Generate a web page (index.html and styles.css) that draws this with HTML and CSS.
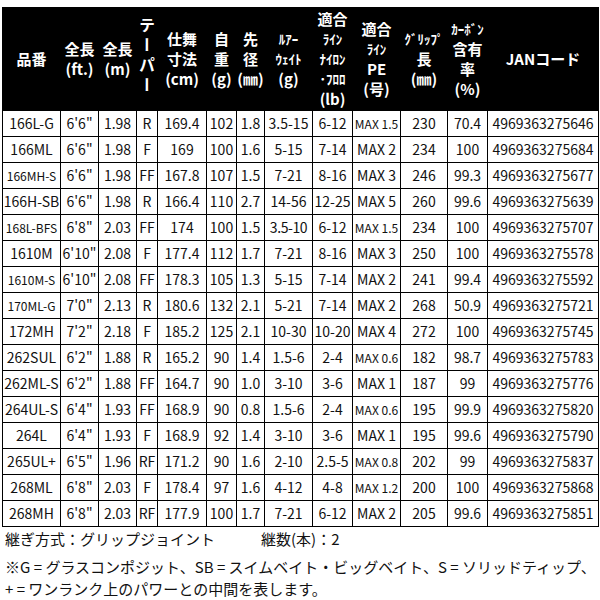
FILE: index.html
```html
<!DOCTYPE html>
<html lang="ja">
<head>
<meta charset="utf-8">
<link rel="stylesheet" href="styles.css">
</head>
<body>
<div class="wrap">
<table class="spec">
<colgroup>
<col class="c1"><col class="c2"><col class="c3"><col class="c4"><col class="c5"><col class="c6"><col class="c7"><col class="c8"><col class="c9"><col class="c10"><col class="c11"><col class="c12"><col class="c13">
</colgroup>
<thead>
<tr>
<th><span class="ln">品番</span></th>
<th><span class="ln">全長</span><span class="ln">(ft.)</span></th>
<th><span class="ln">全長</span><span class="ln">(m)</span></th>
<th><span class="vert">テーパー</span></th>
<th><span class="ln">仕舞</span><span class="ln">寸法</span><span class="ln">(cm)</span></th>
<th><span class="ln">自</span><span class="ln">重</span><span class="ln">(g)</span></th>
<th><span class="ln">先</span><span class="ln">径</span><span class="ln">(㎜)</span></th>
<th><span class="ln hw">ﾙｱｰ</span><span class="ln hw">ｳｪｲﾄ</span><span class="ln">(g)</span></th>
<th><span class="ln">適合</span><span class="ln hw">ﾗｲﾝ</span><span class="ln hw">ﾅｲﾛﾝ</span><span class="ln hw">･ﾌﾛﾛ</span><span class="ln">(lb)</span></th>
<th><span class="ln">適合</span><span class="ln hw">ﾗｲﾝ</span><span class="ln">PE</span><span class="ln">(号)</span></th>
<th><span class="ln hw">ｸﾞﾘｯﾌﾟ</span><span class="ln">長</span><span class="ln">(㎜)</span></th>
<th><span class="ln hw">ｶｰﾎﾞﾝ</span><span class="ln">含有</span><span class="ln">率</span><span class="ln">(%)</span></th>
<th><span class="ln">JANコード</span></th>
</tr>
</thead>
<tbody>
<tr><td>166L-G</td><td>6'6"</td><td>1.98</td><td>R</td><td>169.4</td><td>102</td><td>1.8</td><td>3.5-15</td><td>6-12</td><td class="sm">MAX 1.5</td><td>230</td><td>70.4</td><td>4969363275646</td></tr>
<tr><td>166ML</td><td>6'6"</td><td>1.98</td><td>F</td><td>169</td><td>100</td><td>1.6</td><td>5-15</td><td>7-14</td><td>MAX 2</td><td>234</td><td>100</td><td>4969363275684</td></tr>
<tr><td class="sm">166MH-S</td><td>6'6"</td><td>1.98</td><td>FF</td><td>167.8</td><td>107</td><td>1.5</td><td>7-21</td><td>8-16</td><td>MAX 3</td><td>246</td><td>99.3</td><td>4969363275677</td></tr>
<tr><td>166H-SB</td><td>6'6"</td><td>1.98</td><td>R</td><td>166.4</td><td>110</td><td>2.7</td><td>14-56</td><td>12-25</td><td>MAX 5</td><td>260</td><td>99.6</td><td>4969363275639</td></tr>
<tr><td class="sm">168L-BFS</td><td>6'8"</td><td>2.03</td><td>FF</td><td>174</td><td>100</td><td>1.5</td><td class="nar">3.5-10</td><td>6-12</td><td class="sm">MAX 1.5</td><td>234</td><td>100</td><td>4969363275707</td></tr>
<tr><td>1610M</td><td>6'10"</td><td>2.08</td><td>F</td><td>177.4</td><td>112</td><td>1.7</td><td>7-21</td><td>8-16</td><td>MAX 3</td><td>250</td><td>100</td><td>4969363275578</td></tr>
<tr><td class="sm">1610M-S</td><td>6'10"</td><td>2.08</td><td>FF</td><td>178.3</td><td>105</td><td>1.3</td><td>5-15</td><td>7-14</td><td>MAX 2</td><td>241</td><td>99.4</td><td>4969363275592</td></tr>
<tr><td class="sm">170ML-G</td><td>7'0"</td><td>2.13</td><td>R</td><td>180.6</td><td>132</td><td>2.1</td><td>5-21</td><td>7-14</td><td>MAX 2</td><td>268</td><td>50.9</td><td>4969363275721</td></tr>
<tr><td>172MH</td><td>7'2"</td><td>2.18</td><td>F</td><td>185.2</td><td>125</td><td>2.1</td><td>10-30</td><td>10-20</td><td>MAX 4</td><td>272</td><td>100</td><td>4969363275745</td></tr>
<tr><td>262SUL</td><td>6'2"</td><td>1.88</td><td>R</td><td>165.2</td><td>90</td><td>1.4</td><td>1.5-6</td><td>2-4</td><td class="sm">MAX 0.6</td><td>182</td><td>98.7</td><td>4969363275783</td></tr>
<tr><td>262ML-S</td><td>6'2"</td><td>1.88</td><td>FF</td><td>164.7</td><td>90</td><td>1.0</td><td>3-10</td><td>3-6</td><td>MAX 1</td><td>187</td><td>99</td><td>4969363275776</td></tr>
<tr><td>264UL-S</td><td>6'4"</td><td>1.93</td><td>FF</td><td>168.9</td><td>90</td><td>0.8</td><td>1.5-6</td><td>2-4</td><td class="sm">MAX 0.6</td><td>195</td><td>99.9</td><td>4969363275820</td></tr>
<tr><td>264L</td><td>6'4"</td><td>1.93</td><td>F</td><td>168.9</td><td>92</td><td>1.4</td><td>3-10</td><td>3-6</td><td>MAX 1</td><td>195</td><td>99.6</td><td>4969363275790</td></tr>
<tr><td>265UL+</td><td>6'5"</td><td>1.96</td><td>RF</td><td>171.2</td><td>90</td><td>1.6</td><td>2-10</td><td>2.5-5</td><td class="sm">MAX 0.8</td><td>202</td><td>99</td><td>4969363275837</td></tr>
<tr><td>268ML</td><td>6'8"</td><td>2.03</td><td>F</td><td>178.4</td><td>97</td><td>1.6</td><td>4-12</td><td>4-8</td><td class="sm">MAX 1.2</td><td>200</td><td>100</td><td>4969363275868</td></tr>
<tr><td>268MH</td><td>6'8"</td><td>2.03</td><td>RF</td><td>177.9</td><td>100</td><td>1.7</td><td>7-21</td><td>6-12</td><td>MAX 2</td><td>205</td><td>99.6</td><td>4969363275851</td></tr>
</tbody>
</table>
<div class="joint"><span class="j1">継ぎ方式：グリップジョイント</span><span class="j2">継数(本)：2</span></div>
<p class="note">※G = グラスコンポジット、SB = スイムベイト・ビッグベイト、S = ソリッドティップ、<br>+ = ワンランク上のパワーとの中間を表します。</p>
</div>
</body>
</html>
```
FILE: styles.css
```css
html, body {
  margin: 0;
  padding: 0;
  background: #fff;
}
body {
  font-family: "Noto Sans CJK JP", "Noto Sans", sans-serif;
  color: #111;
}
.wrap {
  padding: 7px 2px 0 2px;
}
.spec {
  border-collapse: collapse;
  table-layout: fixed;
  width: 596px;
}
.c1 { width: 58px; }
.c2 { width: 38px; }
.c3 { width: 38px; }
.c4 { width: 21px; }
.c5 { width: 49px; }
.c6 { width: 30px; }
.c7 { width: 28px; }
.c8 { width: 48px; }
.c9 { width: 40px; }
.c10 { width: 48px; }
.c11 { width: 47px; }
.c12 { width: 40px; }
.c13 { width: 111px; }
.spec th {
  background: #000;
  color: #fff;
  font-weight: bold;
  font-size: 15px;
  height: 102px;
  padding: 0;
  border: 1px solid #000;
  text-align: center;
  vertical-align: middle;
  white-space: nowrap;
}
.spec th .ln {
  display: block;
  height: 20px;
  line-height: 20px;
}
.spec th .ln.hw {
  font-size: 13px;
}
.spec th .vert {
  display: inline-block;
  writing-mode: vertical-rl;
  text-orientation: upright;
  font-size: 16px;
  line-height: 20px;
  letter-spacing: 4px;
}
.spec td {
  border: 1px solid #000;
  height: 25px;
  padding: 0;
  font-size: 14px;
  line-height: 25px;
  text-align: center;
  white-space: nowrap;
  overflow: hidden;
}
.spec td.sm {
  font-size: 12px;
}
.spec td.nar {
  letter-spacing: -0.4px;
}
.joint {
  display: flex;
  font-size: 15px;
  line-height: 20px;
  padding: 2px 0 0 3px;
}
.j2 {
  margin-left: 46px;
}
.note {
  margin: 7px 0 0 3px;
  font-size: 15px;
  line-height: 22px;
}
```
